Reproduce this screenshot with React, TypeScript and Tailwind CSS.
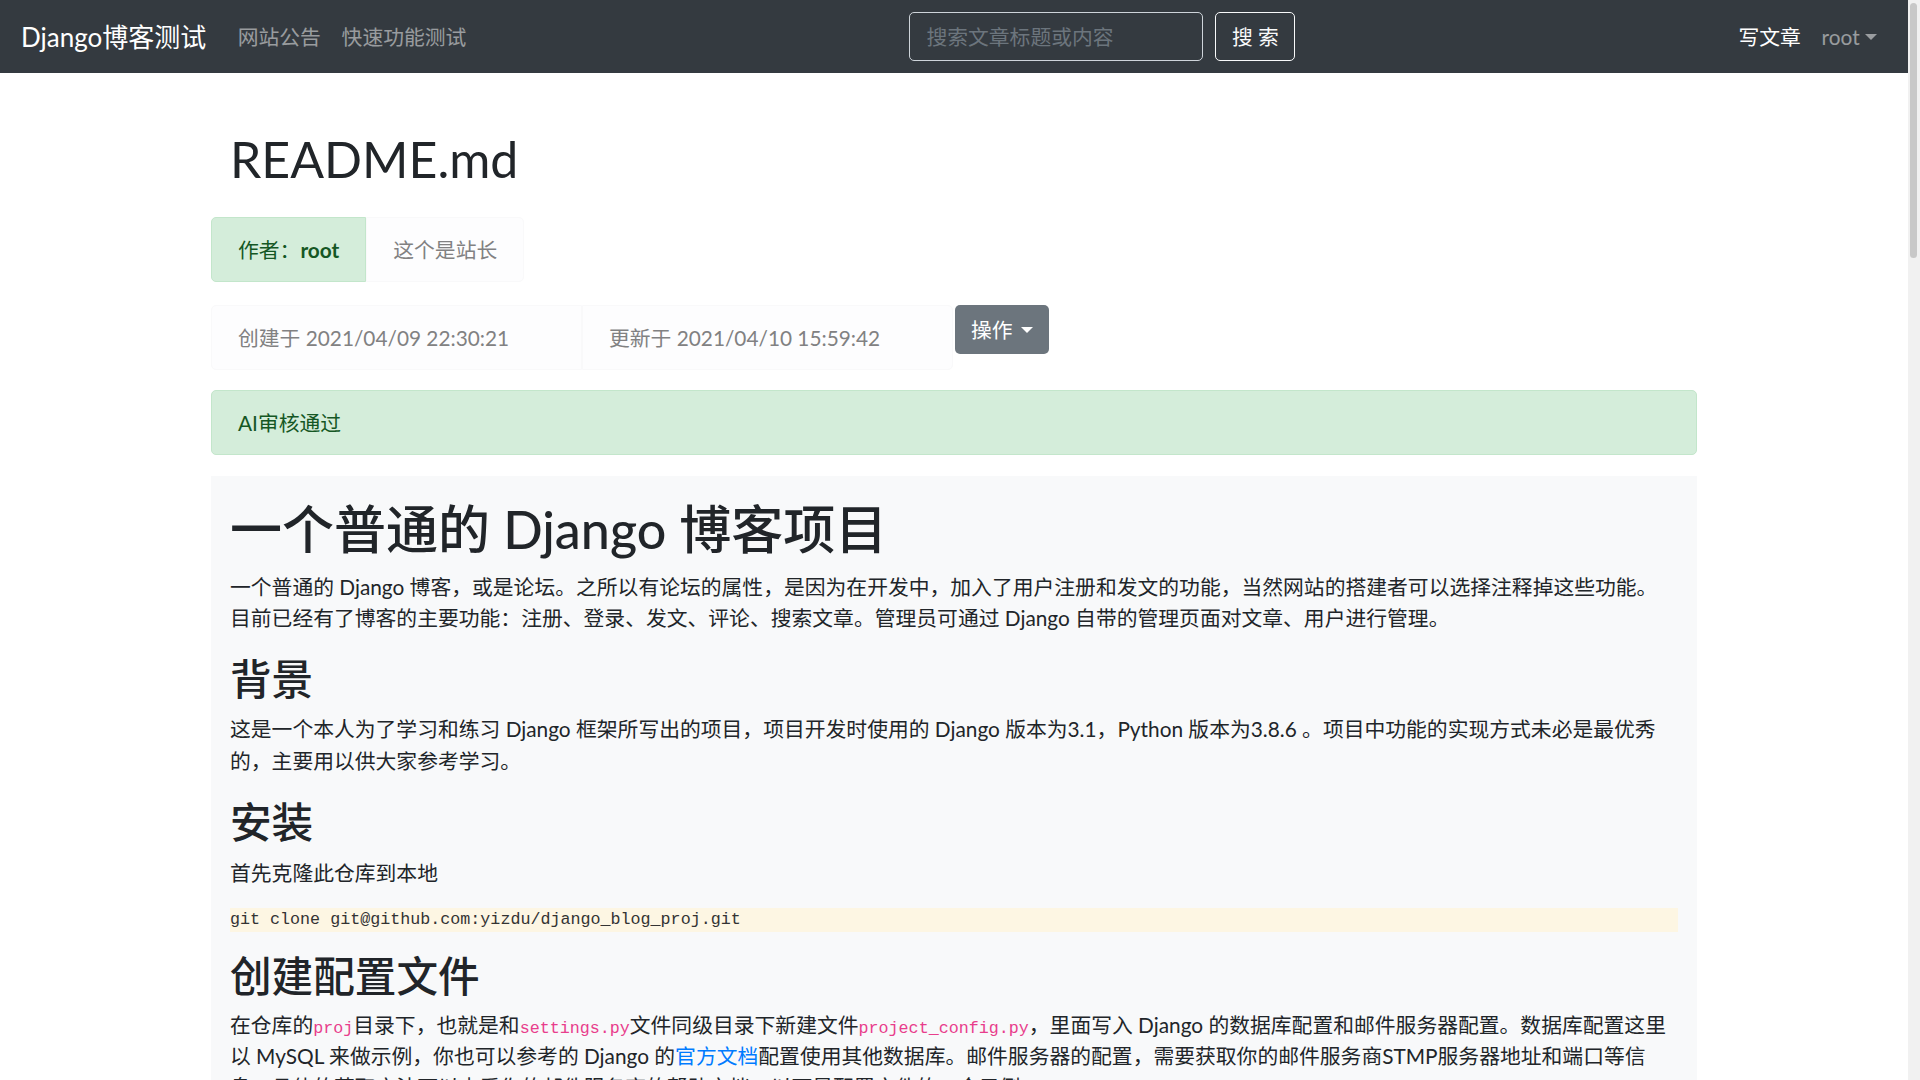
const Caret = ({ className }: { className?: string }) => (
  <span
    className={
      'inline-block ml-[5px] align-middle w-0 h-0 border-l-[6px] border-r-[6px] border-t-[6px] border-l-transparent border-r-transparent ' +
      (className || '')
    }
  />
);

const codeCls = "font-['Liberation_Mono',monospace] text-[16.7px] leading-none text-[#e83e8c]";

export default function App() {
  return (
    <div className="h-screen w-full flex overflow-hidden bg-white text-[#212529] font-['Lato','Noto_Sans_CJK_SC',sans-serif]">
      <div className="flex-1 min-w-0 overflow-hidden">
        <nav className="h-[73px] bg-[#343a40] flex items-center px-[21px]">
          <a className="text-[26px] leading-[38px] text-white mr-[21px]">Django博客测试</a>
          <div className="flex">
            <a className="px-[10.4px] text-[20.8px] leading-[31px] text-white/50">网站公告</a>
            <a className="px-[10.4px] text-[20.8px] leading-[31px] text-white/50">快速功能测试</a>
          </div>
          <form className="mx-auto flex items-center gap-[12px]">
            <input
              className="w-[294px] h-[49px] px-[16px] rounded-[5px] border border-[#ced4da] bg-transparent text-[20.8px] text-white outline-none placeholder:text-[#6c757d]"
              placeholder="搜索文章标题或内容"
            />
            <button type="button" className="w-[80px] h-[49px] border border-[#f8f9fa] rounded-[5px] text-[#f8f9fa] text-[20.8px]">
              搜 索
            </button>
          </form>
          <div className="flex items-center">
            <a className="px-[10.4px] text-[20.8px] leading-[31px] text-white">写文章</a>
            <a className="px-[10.4px] text-[20.8px] leading-[31px] text-white/50 flex items-center">
              root
              <Caret className="border-t-white/50" />
            </a>
          </div>
        </nav>

        <div className="w-[1486px] mx-auto pt-[55px]">
          <h1 className="pl-[19px] text-[50px] leading-[62px] font-normal">README.md</h1>

          <div className="flex mt-[27px]">
            <div className="h-[65px] px-[26px] flex items-center bg-[#d4edda] border border-[#c3e6cb] rounded-l-[5px] text-[#155724] text-[20.8px]">
              作者：<b className="font-bold">root</b>
            </div>
            <div className="h-[65px] px-[26px] flex items-center bg-[#fdfdfe] border border-[#f9f9fa] rounded-r-[5px] text-[#818182] text-[20.8px]">
              这个是站长
            </div>
          </div>

          <div className="flex mt-[23px]">
            <div className="w-[371px] h-[65px] px-[26px] flex items-center bg-[#fdfdfe] border border-[#f9f9fa] rounded-l-[5px] text-[#818182] text-[20.8px]">
              创建于 2021/04/09 22:30:21
            </div>
            <div className="w-[371px] h-[65px] px-[26px] flex items-center bg-[#fdfdfe] border border-[#f9f9fa] rounded-r-[5px] text-[#818182] text-[20.8px]">
              更新于 2021/04/10 15:59:42
            </div>
            <button type="button" className="ml-[2px] h-[49px] px-[16px] flex items-center bg-[#6c757d] rounded-[5px] text-white text-[20.8px]">
              操作
              <Caret className="ml-[8px] border-t-white" />
            </button>
          </div>

          <div className="mt-[20px] h-[65px] px-[26px] flex items-center bg-[#d4edda] border border-[#c3e6cb] rounded-[5px] text-[#155724] text-[20.8px]">
            AI审核通过
          </div>

          <div className="mt-[21px] bg-[#f8f9fa] px-[19px] pt-[22px] min-h-[1200px] text-[20.8px] leading-[31.2px]">
            <h1 className="text-[52px] leading-[62px] font-medium mb-[11px]">一个普通的 Django 博客项目</h1>
            <p className="mb-[21px]">
              一个普通的 Django 博客，或是论坛。之所以有论坛的属性，是因为在开发中，加入了用户注册和发文的功能，当然网站的搭建者可以选择注释掉这些功能。
              <br />
              目前已经有了博客的主要功能：注册、登录、发文、评论、搜索文章。管理员可通过 Django 自带的管理页面对文章、用户进行管理。
            </p>

            <h2 className="text-[41.6px] leading-[50px] font-medium mb-[9px]">背景</h2>
            <p className="mb-[21px]">
              这是一个本人为了学习和练习 Django 框架所写出的项目，项目开发时使用的 Django 版本为3.1，Python 版本为3.8.6 。项目中功能的实现方式未必是最优秀
              <br />
              的，主要用以供大家参考学习。
            </p>

            <h2 className="text-[41.6px] leading-[50px] font-medium mb-[10px]">安装</h2>
            <p className="mb-[20px]">首先克隆此仓库到本地</p>
            <pre className="mb-[19px] h-[24px] bg-[#fdf6e3] font-['Liberation_Mono',monospace] text-[16.7px] leading-[24px] text-[#333]">
              git clone git@github.com:yizdu/django_blog_proj.git
            </pre>

            <h2 className="text-[41.6px] leading-[50px] font-medium mb-[8px]">创建配置文件</h2>
            <p className="mb-[21px]">
              在仓库的<code className={codeCls}>proj</code>目录下，也就是和
              <code className={codeCls}>settings.py</code>文件同级目录下新建文件
              <code className={codeCls}>project_config.py</code>，里面写入 Django 的数据库配置和邮件服务器配置。数据库配置这里
              <br />
              以 MySQL 来做示例，你也可以参考的 Django 的<a className="text-[#007bff]">官方文档</a>配置使用其他数据库。邮件服务器的配置，需要获取你的邮件服务商STMP服务器地址和端口等信
              <br />
              息，具体的获取方法可以查看你的邮件服务商的帮助文档。以下是配置文件的一个示例：
            </p>
          </div>
        </div>
      </div>

      {/* page scrollbar */}
      <div className="w-[12px] shrink-0 bg-[#f1f1f1]">
        <div className="mt-[3px] ml-[2px] w-[7px] h-[255px] rounded-full bg-[#c8c8c8]" />
      </div>
    </div>
  );
}
